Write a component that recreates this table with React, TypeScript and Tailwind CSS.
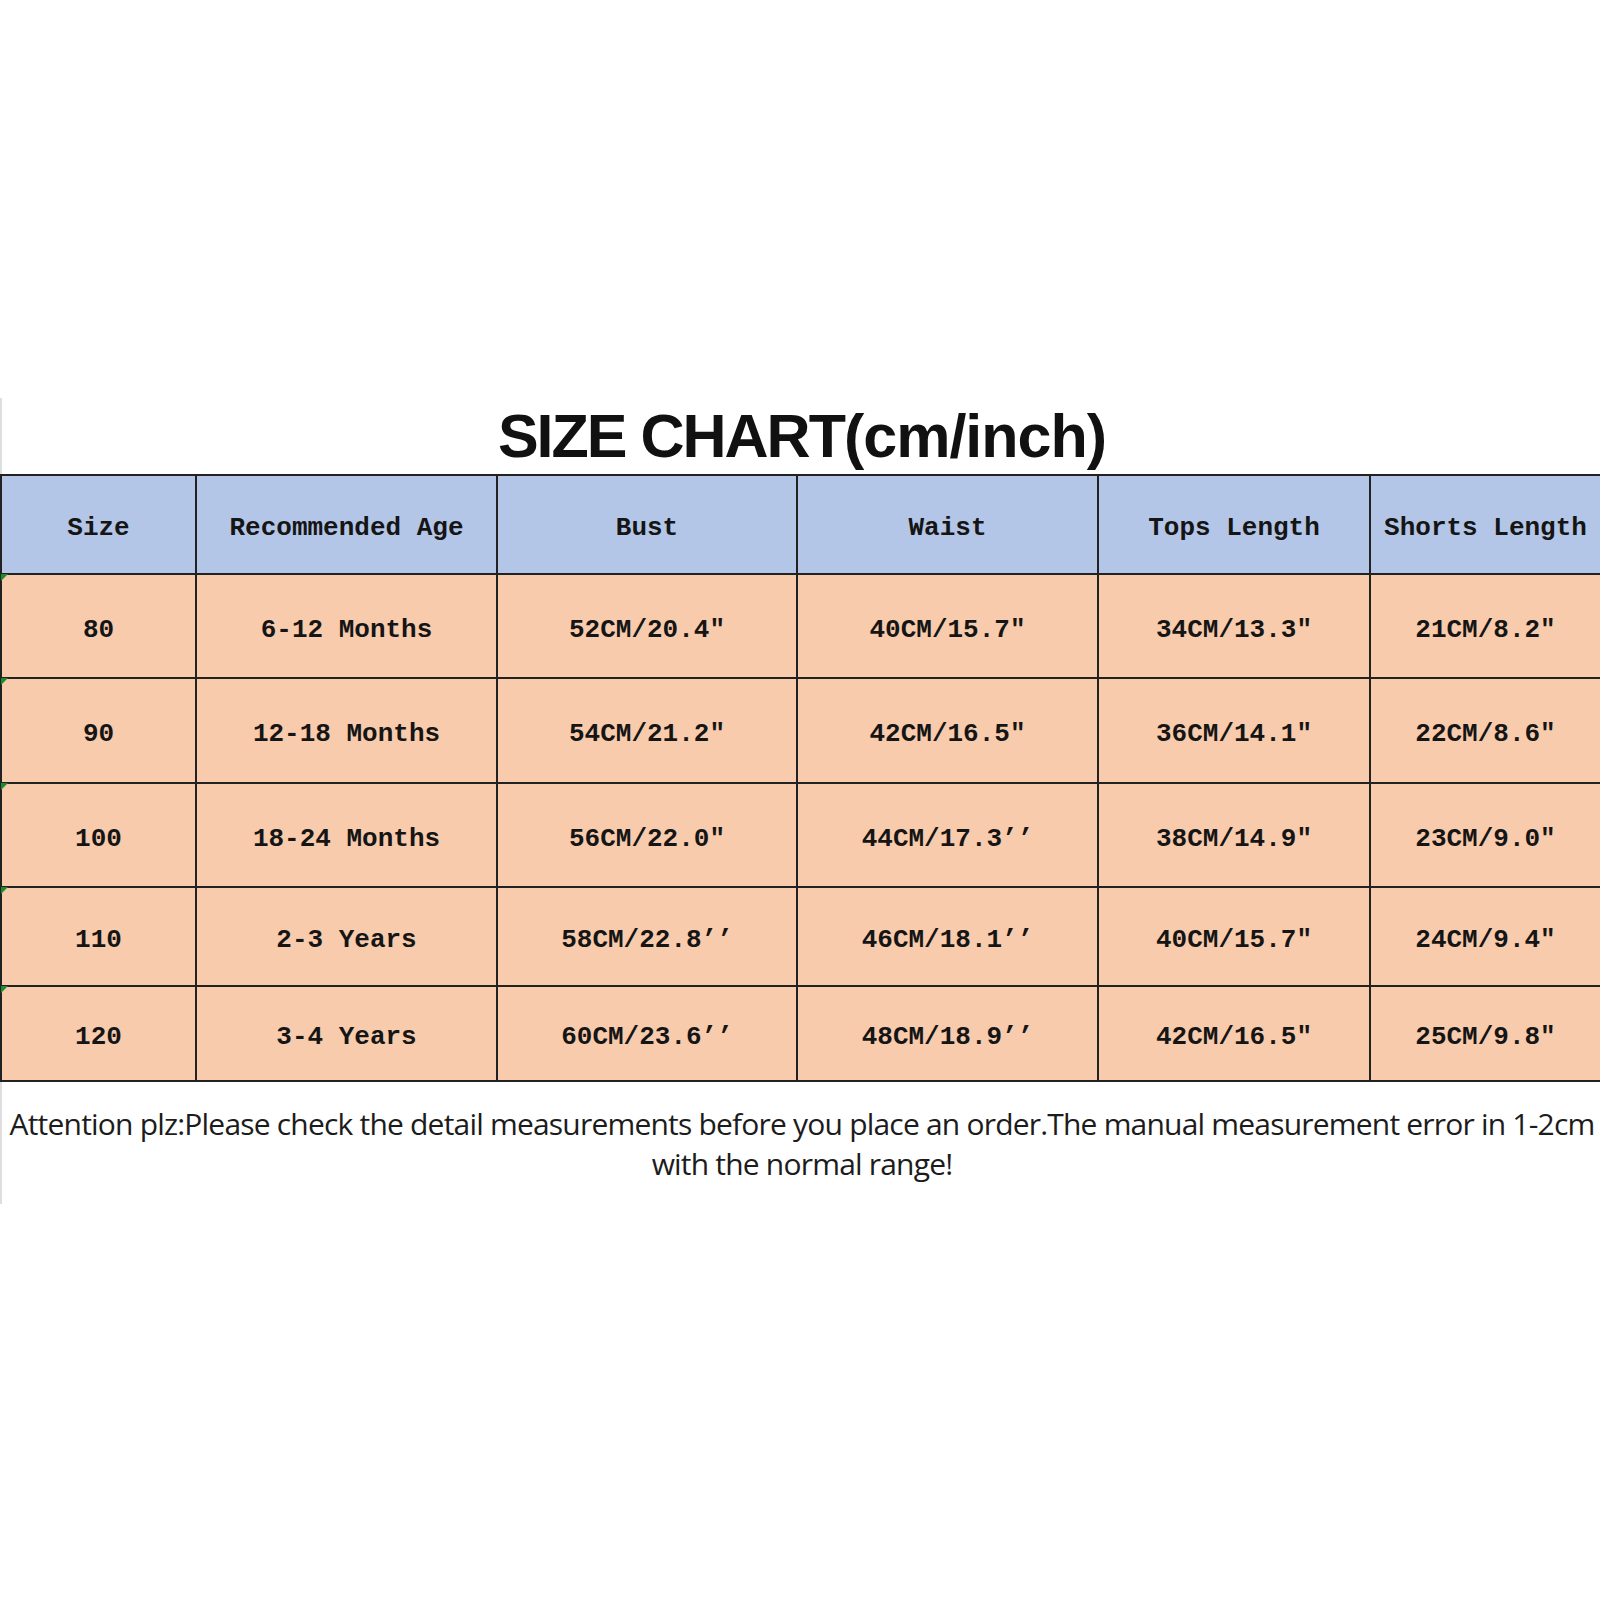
import React from 'react';

const cols = ['Size', 'Recommended Age', 'Bust', 'Waist', 'Tops Length', 'Shorts Length'];

const rows = [
  { h: 'h-[102px]', cells: ['80', '6-12 Months', '52CM/20.4″', '40CM/15.7″', '34CM/13.3″', '21CM/8.2″'] },
  { h: 'h-[103px]', cells: ['90', '12-18 Months', '54CM/21.2″', '42CM/16.5″', '36CM/14.1″', '22CM/8.6″'] },
  { h: 'h-[102px]', cells: ['100', '18-24 Months', '56CM/22.0″', '44CM/17.3’’', '38CM/14.9″', '23CM/9.0″'] },
  { h: 'h-[97px]', cells: ['110', '2-3 Years', '58CM/22.8’’', '46CM/18.1’’', '40CM/15.7″', '24CM/9.4″'] },
  { h: 'h-[93px]', cells: ['120', '3-4 Years', '60CM/23.6’’', '48CM/18.9’’', '42CM/16.5″', '25CM/9.8″'] },
];

const mono = "font-['Liberation_Mono',monospace] font-bold text-[26px] text-[#151515] pt-[8px]";

export default function App() {
  return (
    <div className="w-[1600px] h-[1600px] bg-white overflow-hidden">
      <div className="pt-[398px]">
        <div className="border-l-2 border-[#dedede] h-[806px] w-[1602px]">
          {/* title */}
          <div className="h-[76px] flex items-end justify-center pb-[7px]">
            <h1 className="font-['Liberation_Sans',Arial,sans-serif] font-bold text-[61px] leading-none tracking-[-2px] text-[#111]">
              SIZE CHART<span className="tracking-[-1px]">(cm/inch)</span>
            </h1>
          </div>

          {/* table */}
          <div className="-ml-[2px] w-[1602px] bg-[#222] p-[2px] grid grid-cols-[193px_299px_298px_299px_270px_229px] gap-[2px]">
            {cols.map((c) => (
              <div key={c} className={`h-[97px] bg-[#b4c6e7] flex items-center justify-center ${mono}`}>
                {c}
              </div>
            ))}
            {rows.map((r) =>
              r.cells.map((c, i) => (
                <div key={r.cells[0] + i} className={`${r.h} relative bg-[#f8cbad] flex items-center justify-center ${mono}`}>
                  {i === 0 && (
                    <span className="absolute -left-[1px] -top-[1px] w-0 h-0 border-t-[7px] border-t-[#1e8a2e] border-r-[7px] border-r-transparent" />
                  )}
                  {c}
                </div>
              ))
            )}
          </div>

          {/* note */}
          <p className="pt-[22px] text-center font-['Open_Sans',sans-serif] text-[30px] leading-[40px] tracking-[-0.8px] text-[#1c1c1c]">
            Attention plz:Please check the detail measurements before you place an order.The manual measurement error in 1-2cm with the normal range!
          </p>
        </div>
      </div>
    </div>
  );
}
